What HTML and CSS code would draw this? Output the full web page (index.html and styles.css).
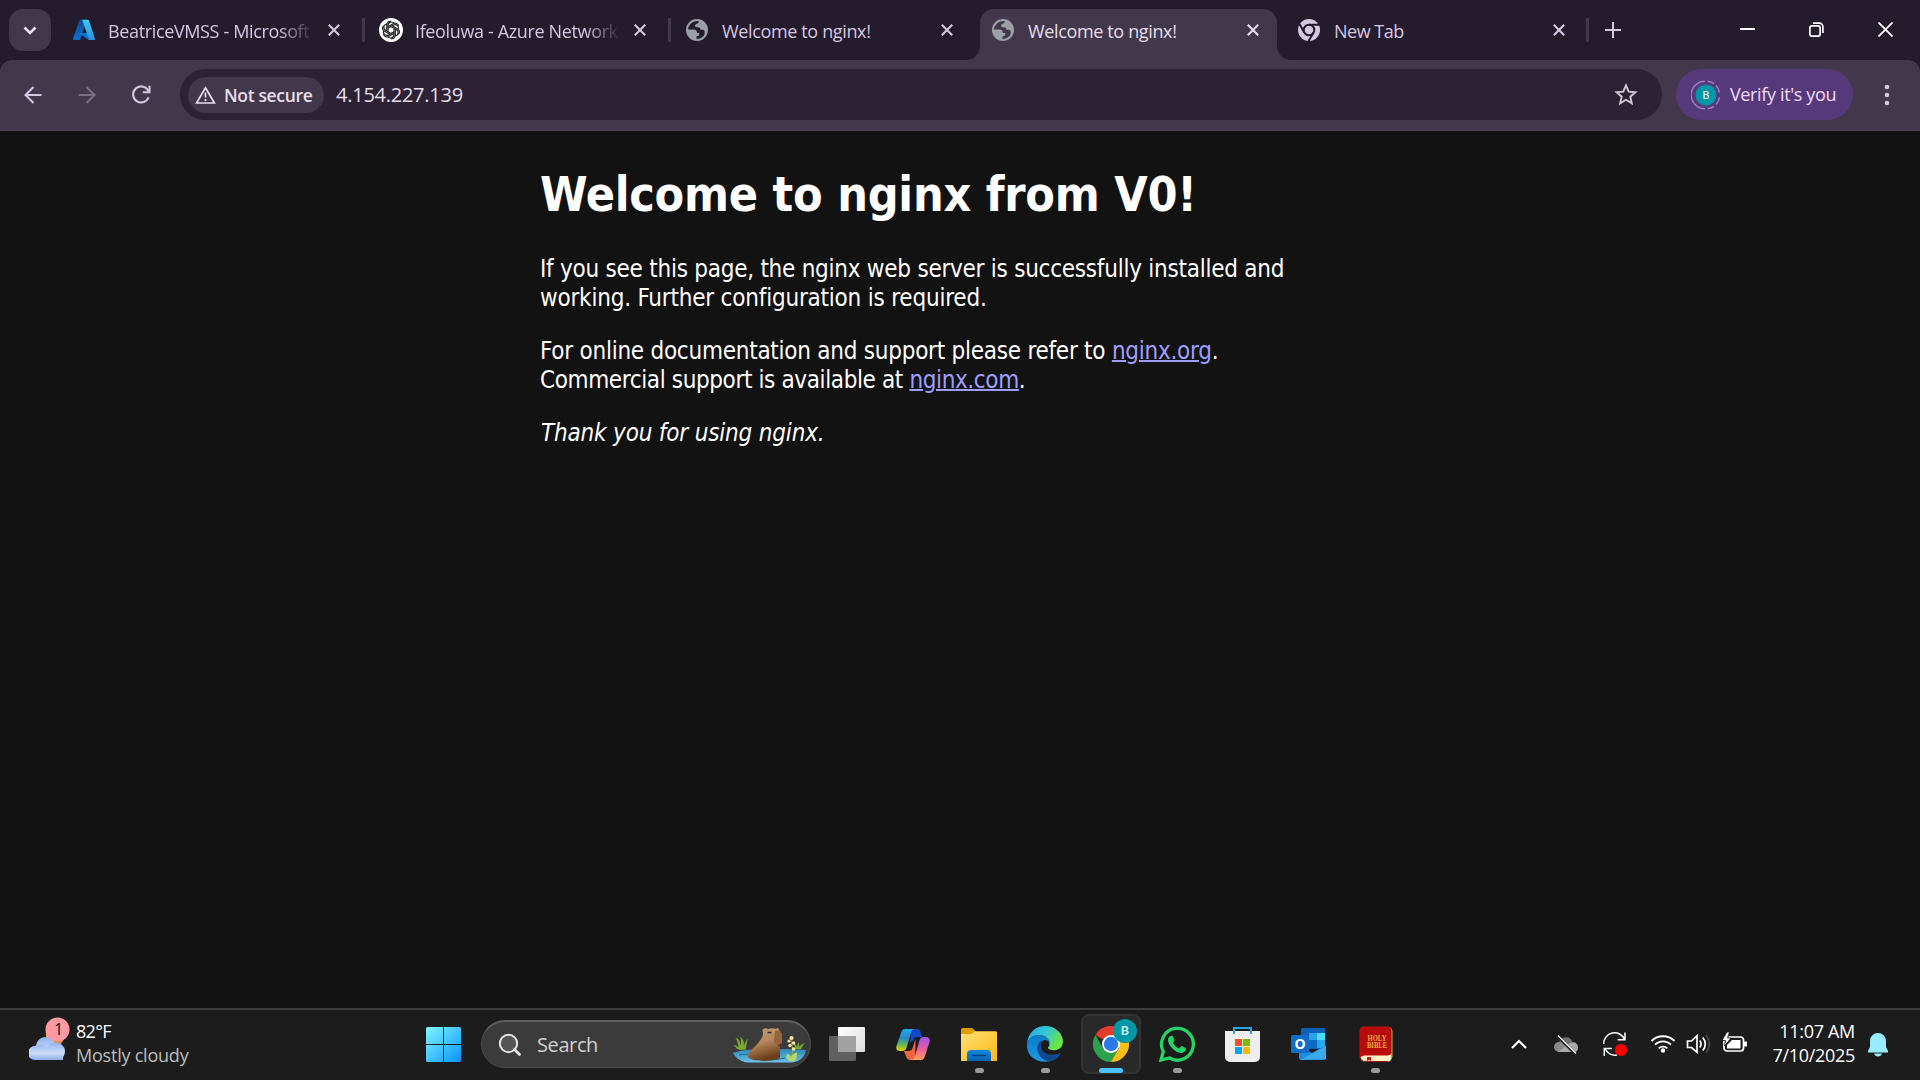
FILE: index.html
```html
<!DOCTYPE html>
<html lang="en">
<head>
<meta charset="utf-8">
<title>Welcome to nginx!</title>
<link rel="stylesheet" href="styles.css">
</head>
<body>
<svg width="0" height="0" class="defs" aria-hidden="true">
  <defs>
    <symbol id="close" viewBox="0 0 12 12"><path d="M.8.8l10.400 10.400M11.200.8L.8 11.200" fill="none" stroke="currentColor" stroke-width="2.100"/></symbol>
    <symbol id="globe" viewBox="0 0 22 22">
      <circle cx="11" cy="11" r="10" fill="none" stroke="#9aa0a6" stroke-width="2"/>
      <path d="M13 1.500c0 1.800-.6 2.800-2 3.200-1.400.3-1.900 1-1.900 2.300 0 1 .9 1.300 2.400 1.300 2.100 0 2.900.8 2.900 2.400h2.200c1.500 0 2 .6 2 2.100V17c2-1.800 2.700-4 2.600-6.500C20.800 5.500 17.500 2 13 1.500zM1.200 10.500h6.300c2.200 0 3.500 1.200 3.500 3.400h2.200c.7 2-.3 3.300-2.700 3.300v3.700C5 20.800 1 16.800 1.200 10.500z" fill="#9aa0a6"/>
    </symbol>
  </defs>
</svg>

<header class="tabstrip">
  <button class="tab-search" aria-label="Search tabs"><svg width="14" height="9" viewBox="0 0 14 9"><path d="M1.500 1.500L7 7l5.500-5.500" fill="none" stroke="#e6dfea" stroke-width="2.600"/></svg></button>
  <div class="tabs">
    <div class="tab first">
      <svg class="fav" viewBox="0 0 22 22"><defs><linearGradient id="azl" x1="0" y1="0" x2="0" y2="1"><stop offset="0" stop-color="#114a8b"/><stop offset="1" stop-color="#0a6fd0"/></linearGradient><linearGradient id="azr" x1="0" y1="0" x2="0" y2="1"><stop offset="0" stop-color="#3ccbf4"/><stop offset="1" stop-color="#2892df"/></linearGradient></defs><path d="M7.500.8h6.200L7.500 20c-.3.700-.8 1.100-1.400 1.100H1.300c-.9 0-1.500-.8-1.200-1.700L6.200 1.700c.2-.5.700-.9 1.300-.9z" fill="url(#azl)"/><path d="M5 14h9.500l1 7-8-6z" fill="#0078d4"/><path d="M8 .8h6.700c.6 0 1.100.4 1.300.9l5.900 17.700c.3.900-.3 1.700-1.200 1.700h-6.300c.9 0 1.500-.8 1.200-1.700L9.500 1.700C9.300 1.200 8.800.8 8 .8z" fill="url(#azr)"/></svg>
      <span class="title fade">BeatriceVMSS - Microsoft</span><svg class="x"><use href="#close"/></svg><i class="sep"></i>
    </div>
    <div class="tab">
      <svg class="fav gpt" viewBox="0 0 24 24"><circle cx="12" cy="12" r="12" fill="#fff"/><g fill="none" stroke="#222" stroke-width="1.200"><g id="petal"><path d="M9 13.700V7.400a3.400 3.400 0 016.200-1.900M9 8.800l5.500-3.200a3.400 3.400 0 015 2.200" /></g><use href="#petal" transform="rotate(60 12 12)"/><use href="#petal" transform="rotate(120 12 12)"/><use href="#petal" transform="rotate(180 12 12)"/><use href="#petal" transform="rotate(240 12 12)"/><use href="#petal" transform="rotate(300 12 12)"/></g></svg>
      <span class="title fade">Ifeoluwa - Azure Network</span><svg class="x"><use href="#close"/></svg><i class="sep"></i>
    </div>
    <div class="tab late"><svg class="fav"><use href="#globe"/></svg><span class="title">Welcome to nginx!</span><svg class="x"><use href="#close"/></svg></div>
    <div class="tab active"><svg class="fav"><use href="#globe"/></svg><span class="title">Welcome to nginx!</span><svg class="x"><use href="#close"/></svg></div>
    <div class="tab late">
      <svg class="fav" viewBox="0 0 22 22"><circle cx="11" cy="11" r="11" fill="#d6c6e1"/><circle cx="11" cy="11" r="5.300" fill="none" stroke="#241b2d" stroke-width="2"/><path d="M11 5.700h10M6.400 13.700L1.500 5M15.600 13.600L10.600 22" stroke="#241b2d" stroke-width="2"/></svg>
      <span class="title newtab">New Tab</span><svg class="x"><use href="#close"/></svg><i class="sep"></i>
    </div>
  </div>
  <svg class="plus" width="16" height="16" viewBox="0 0 16 16"><path d="M8 0v16M0 8h16" stroke="#d6c6e1" stroke-width="2"/></svg>
  <div class="window-buttons">
    <svg width="15" height="15" viewBox="0 0 15 15"><path d="M0 7h15" stroke="#fff" stroke-width="2"/></svg>
    <svg width="15" height="15" viewBox="0 0 15 15" fill="none" stroke="#fff" stroke-width="1.700"><rect x=".9" y="3.900" width="10.200" height="10.200" rx="2"/><path d="M4 1.200h6.300a3.600 3.600 0 013.600 3.600V11"/></svg>
    <svg width="15" height="15" viewBox="0 0 15 15"><path d="M.5.5l14 14M14.500.5l-14 14" stroke="#fff" stroke-width="1.800"/></svg>
  </div>
</header>

<div class="toolbar-bg">
<nav class="toolbar">
  <div class="nav-icons">
    <svg width="18" height="18" viewBox="0 0 18 18" fill="none" stroke="#d6c6e1" stroke-width="2"><path d="M17.500 9H1.500M9.500 1L1.500 9l8 8"/></svg>
    <svg width="18" height="18" viewBox="0 0 18 18" fill="none" stroke="#7b6f84" stroke-width="2"><path d="M.5 9h16M8.500 1l8 8-8 8"/></svg>
    <svg width="19" height="19" viewBox="0 0 19 19" fill="none" stroke="#d6c6e1" stroke-width="2.100"><path d="M16.600 12.300A8 8 0 1116 5.300L17 6.800M17.500.8v6.400h-6.700"/></svg>
  </div>
  <div class="omnibox">
    <div class="chip"><svg width="21" height="18" viewBox="0 0 21 18"><path d="M10.500 1.800L19.400 17H1.600z" fill="none" stroke="#e6dfea" stroke-width="1.700"/><path d="M10.500 6.500v5M10.500 13v2" stroke="#e6dfea" stroke-width="1.700"/></svg><span class="insecure">Not secure</span></div>
    <span class="url">4.154.227.139</span>
    <svg class="star" width="24" height="23" viewBox="0 0 24 23"><path d="M12 2.500l2.700 6.200 6.700.6-5.100 4.400 1.500 6.600-5.800-3.500-5.800 3.500 1.500-6.600-5.100-4.400 6.700-.6z" fill="none" stroke="#d0c8d4" stroke-width="1.900"/></svg>
  </div>
  <div class="verify">
    <svg width="30" height="30" viewBox="0 0 30 30"><circle cx="15" cy="15" r="10.500" fill="#0097a7"/><path d="M14 1.200A13.800 13.800 0 0014 28.800M16.500 1.300A13.800 13.800 0 0123 3.700M25 5.500A13.800 13.800 0 0128.500 12.500M28.600 17A13.800 13.800 0 0125 24.500M23 26.300A13.800 13.800 0 0116.500 28.700" fill="none" stroke="#a07ec4" stroke-width="1.500"/><text x="15" y="19" text-anchor="middle" font-size="11" font-family="Roboto, sans-serif" fill="#fff">B</text></svg>
    <span class="verify-text">Verify it's you</span>
  </div>
  <svg class="menu" width="6" height="22" viewBox="0 0 6 22" fill="#d6c6e1"><circle cx="3" cy="3" r="2.300"/><circle cx="3" cy="11" r="2.300"/><circle cx="3" cy="19" r="2.300"/></svg>
</nav>
</div>

<main class="page">
  <article class="content">
    <h1>Welcome to nginx from V0!</h1>
    <p>If you see this page, the nginx web server is successfully installed and<br><span class="loose">working. Further configuration is required.</span></p>
    <p>For online documentation and support please refer to <a href="#">nginx.org</a>.<br><span class="tight">Commercial support is available at <a href="#">nginx.com</a>.</span></p>
    <p><em>Thank you for using nginx.</em></p>
  </article>
</main>

<footer class="taskbar">
  <div class="weather">
    <svg width="41" height="44" viewBox="0 0 41 44"><defs><linearGradient id="cl" x1="0" y1="0" x2="0" y2="1"><stop offset="0" stop-color="#8fb2f0"/><stop offset=".6" stop-color="#cbdcf7"/><stop offset="1" stop-color="#8eb0ee"/></linearGradient></defs><circle cx="26" cy="20" r="9" fill="#f28a1c"/><path d="M17 17l3 2-2 4z" fill="#f6c62b"/><path d="M8 43a7 7 0 01-1-14.300C8 23 12 20 17 20c4 0 7 2 8.500 5.500A9 9 0 0134 34v9z" fill="url(#cl)"/><path d="M6 43a7 7 0 010-14 9 9 0 0112 2c1-4 5-5.500 8.500-5.500A9.300 9.300 0 0136 34c0 5-3 9-8 9z" fill="url(#cl)"/><circle cx="28.500" cy="12.500" r="12" fill="#ff99a4"/><text x="29.500" y="18" text-anchor="middle" font-size="16" font-family="Noto Sans, sans-serif" fill="#222">1</text></svg>
    <div class="weather-text"><span class="temp">82°F</span><br><span class="cond">Mostly cloudy</span></div>
  </div>
  <svg class="start" width="35" height="35" viewBox="0 0 35 35"><defs><linearGradient id="win" gradientUnits="userSpaceOnUse" x1="0" y1="0" x2="35" y2="35"><stop offset="0" stop-color="#7df6ff"/><stop offset="1" stop-color="#0a93ff"/></linearGradient></defs><path d="M1.500 0H17v17H0V1.500A1.500 1.500 0 011.500 0zM18 0h15.500A1.500 1.500 0 0135 1.500V17H18zM0 18h17v17H1.500A1.500 1.500 0 010 33.500zM18 18h17v15.500a1.500 1.500 0 01-1.500 1.500H18z" fill="url(#win)"/></svg>
  <div class="search">
    <svg width="24" height="24" viewBox="0 0 24 24"><circle cx="10.500" cy="10.500" r="8.700" fill="#555" stroke="#e4e6ea" stroke-width="2"/><path d="M16.500 16.500l5 5" stroke="#e4e6ea" stroke-width="2.800" stroke-linecap="round"/></svg>
    <span class="search-text">Search</span>
    <svg class="capy" width="74" height="36" viewBox="0 0 74 36"><defs><linearGradient id="fur" x1="0" y1="0" x2=".3" y2="1"><stop offset="0" stop-color="#c49a70"/><stop offset=".5" stop-color="#b88a5e"/><stop offset="1" stop-color="#6b3c18"/></linearGradient><linearGradient id="wat" x1="0" y1="0" x2="0" y2="1"><stop offset="0" stop-color="#2a86b4"/><stop offset="1" stop-color="#6cc0e8"/></linearGradient></defs><path d="M0 26c8-3 20-4 37-4s29 0 36 1c-1 7-7 12-14 12.500H14C7 34.500 2 30 0 26z" fill="url(#wat)"/><path d="M6 28c10-2 14 2 22 4 8 1 16 1 24-1" stroke="#1d6a98" fill="none"/><path d="M6 23C5 19 5 13 2 10.500c4 1 5 4 6 8 0-4 0-7-1-9 3 2 4 5 4 9 1-3 2-5 4-7-1 4-2 7-2 11zM4 22c-1-2-2-3-4-4 3 0 5 1 6 4zM62 22c0-3-1-5-2-6 2 0 3 2 4 4 0-2 1-4 2-5v5c1-2 3-3 6-4-2 2-3 4-4 6z" fill="#78a82e"/><path d="M15 28c2-6 8-8 11-13 3-4 4-6 4-8 0-2-1-3 0-5 2-1 4-1 5 0 3-1 6-1 8 0 1-2 3-1 3 1 2 2 3 4 3 7 0 3-1 5-2 7v14c-8 4-27 4-32-1z" fill="url(#fur)"/><path d="M42 4c5-1 7 1 7 5v7c-3 3-7 2-8-1z" fill="#94633f"/><path d="M44 17c1 1 3 1 4-1l1 2-2 2z" fill="#5e2c2c"/><path d="M34.500 5.500h4" stroke="#332236" stroke-width="1.500"/><path d="M59 34.500c-6-1-6-5-5-8 2 1 4 2 4 4 0-2 2-4 6-5 0 4 0 9-5 9z" fill="#b7d866"/><path d="M59 28c2-6-1-10-1-17" stroke="#8aa650" fill="none"/><g fill="#ffe3a0"><circle cx="58.500" cy="11" r="2.100"/><circle cx="56" cy="14" r="1.600"/><circle cx="60.500" cy="16" r="1.800"/><circle cx="57" cy="18.500" r="1.700"/><circle cx="60.500" cy="22" r="1.800"/></g></svg>
  </div>
  <div class="apps">
    <div class="app"><svg width="36" height="34" viewBox="0 0 36 34"><defs><linearGradient id="tv" x1="0" y1="0" x2="1" y2="1"><stop offset="0" stop-color="#fff"/><stop offset="1" stop-color="#ddd"/></linearGradient></defs><rect x="9" y="0" width="27" height="25" rx="1" fill="url(#tv)"/><rect x="0" y="9" width="27" height="25" rx="1" fill="#606060"/><path d="M9 9h18v16H9z" fill="#a2a2a2"/></svg></div>
    <div class="app"><svg width="34" height="31" viewBox="0 0 34 31"><defs><linearGradient id="c1" x1="0" y1="0" x2="0" y2="1"><stop offset="0" stop-color="#1aaef0"/><stop offset=".4" stop-color="#2389c8"/><stop offset=".7" stop-color="#62b65a"/><stop offset="1" stop-color="#f1d00b"/></linearGradient><linearGradient id="c2" x1="0" y1="0" x2="0" y2="1"><stop offset="0" stop-color="#9a55f0"/><stop offset=".5" stop-color="#e85a9c"/><stop offset="1" stop-color="#ffa05c"/></linearGradient></defs><path d="M16 0h5c2 0 3 1 3.600 3l1.500 5H21c-2 0-3 1-3.600 3L14 14z" fill="#1546c8"/><path d="M8 22h5c2 0 3-1 3.600-3l3-9L19 31h-5c-2 0-3-1-3.600-3z" fill="#f2643d"/><path d="M9 0h10c-2 0-3 1-3.600 3l-5 16c-.7 2-2 3-4 3H4c-3 0-4.500-2-3.500-5L5 4c1-2.500 2-4 4-4z" fill="url(#c1)"/><path d="M25 31H14c2 0 4-1 4.600-3l5-17c.7-2 2-3 4-3H30c3 0 4.500 2 3.500 5L29 27c-1 2.500-2 4-4 4z" fill="url(#c2)"/></svg></div>
    <div class="app dot"><svg width="36" height="33" viewBox="0 0 36 33"><defs><linearGradient id="fo" x1="0" y1="0" x2="1" y2="1"><stop offset="0" stop-color="#ffe07a"/><stop offset="1" stop-color="#fdb912"/></linearGradient><linearGradient id="fb" x1="0" y1="0" x2="0" y2="1"><stop offset="0" stop-color="#1288dd"/><stop offset="1" stop-color="#0b62b4"/></linearGradient></defs><path d="M0 1.500A1.500 1.500 0 011.500 0H11l4 3.500L11 8H0z" fill="#dd9c00"/><path d="M0 6h10.500l3.500-2.700h20.500A1.500 1.500 0 0136 4.800V33H0z" fill="url(#fo)"/><path d="M6 33v-7a4 4 0 014-4h16a4 4 0 014 4v7z" fill="url(#fb)"/><path d="M11 27.500h14" stroke="#074581" stroke-width="1.500"/></svg></div>
    <div class="app dot"><svg width="36" height="36" viewBox="0 0 36 36"><defs><linearGradient id="e1" x1="0" y1="0" x2="1" y2=".5"><stop offset="0" stop-color="#2aa5e8"/><stop offset=".5" stop-color="#31c5d9"/><stop offset="1" stop-color="#6be83f"/></linearGradient><linearGradient id="e2" x1="0" y1="0" x2="0" y2="1"><stop offset="0" stop-color="#0c7bc6"/><stop offset="1" stop-color="#1b9be8"/></linearGradient></defs><path d="M0 18C1 7 8 0 18 0c11 0 18 8 18 15.500 0 6-5 8.800-9 8.800-4 0-6-1.300-6-2.600 0-.8 1.500-1.400 1.500-4C22.500 13 18 9 12 9 6 9 1.500 13 0 18z" fill="url(#e1)"/><path d="M0 19C.5 13 5 9 12 9c6 0 10.500 4 10.500 8-1-2-2.500-3-4.500-3-6 2-8 8-4 14 2 4 6 7 10 7C11 38-.5 31 0 19z" fill="url(#e2)"/><path d="M17 14c-6 1-8 7-6 12 2 6 7 10 13 9 5-1 8-4 9.500-7.500-.3-.8-1-.6-1.500-.3C23 31 13 27 14 18.500c.3-2 1.500-3.500 3-4.500z" fill="#10498f"/></svg></div>
    <div class="app current"><svg width="36" height="36" viewBox="0 0 36 36"><path d="M18 18L2.400 9A18 18 0 0133.600 9H18z" fill="#e33b2e"/><path d="M2.400 9A18 18 0 0018 36l7.800-13.500L18 18l-7.800 4.500z" fill="#2da04b"/><path d="M18 36A18 18 0 0033.600 9H18l7.800 13.500z" fill="#fdc012"/><circle cx="18" cy="18" r="9" fill="#fff"/><circle cx="18" cy="18" r="7.200" fill="#2b78e8"/></svg><b class="profile">B</b></div>
    <div class="app dot"><svg width="36" height="36" viewBox="0 0 36 36"><path d="M2 34l2.300-8.500A15.900 15.900 0 1110.500 32z" fill="none" stroke="#25d366" stroke-width="3.300"/><path d="M12.800 9.800c.7 0 1 .2 1.300 1l1.300 3c.2.600 0 1-.3 1.500l-1.300 1.500c1.500 2.700 3.500 4.500 6.300 5.700l1.700-2c.4-.5.8-.6 1.400-.3l3 1.500c.7.300.8.600.7 1.200-.4 2.700-2.300 4-5 4-5.500-.6-11.500-6-12.900-12-.2-2.500 1-5.100 3.800-5.100z" fill="#25d366"/></svg></div>
    <div class="app store"><svg width="35" height="35" viewBox="0 0 35 35"><path d="M0 4h35v26a5 5 0 01-5 5H5a5 5 0 01-5-5z" fill="#eee"/><path d="M9 7V1h17v6" fill="none" stroke="#25a8e8" stroke-width="2"/><path d="M10 12h7v7h-7z" fill="#f25022"/><path d="M18 12h7v7h-7z" fill="#7fba00"/><path d="M10 20h7v7h-7z" fill="#00a4ef"/><path d="M18 20h7v7h-7z" fill="#ffb900"/></svg></div>
    <div class="app store"><svg width="35" height="32" viewBox="0 0 35 32"><path d="M11 0h22.500L34 1v20H10V1z" fill="#0f5fb4"/><path d="M18 5h8v7h-8z" fill="#28a0ea"/><path d="M26 5h8v7h-8z" fill="#50d9ff"/><path d="M18 12h8v8h-8z" fill="#0b6ac4"/><path d="M26 12h8v8h-8z" fill="#28a8ea"/><path d="M8 18l13 7 14-8v13.500L33.500 32h-24L8 30.500z" fill="#1f8be0"/><path d="M35 18v13L9 32z" fill="#39a9ec"/><rect x="0" y="7" width="18" height="18" rx="1.500" fill="#0f6cc7"/><text x="9" y="21" font-size="14" font-weight="700" font-family="Open Sans, sans-serif" text-anchor="middle" fill="#fff">O</text></svg></div>
    <div class="app dot bible"><svg width="34" height="36" viewBox="0 0 34 36"><path d="M28 .5q5.500 0 5.500 6v24q-1 5-6 5z" fill="#d8a63c"/><path d="M1 29h31v5q-2 2-5 2H6q-5-1-5-6z" fill="#fff0c8"/><path d="M5 .5h24q3 0 3.500 4v22q-.5 3-4.500 3H6q-4 0-5.500 3L.5 5q0-4.500 4.500-4.500z" fill="#b80c0c"/><path d="M1 31q1 4.500 6 4.500h22" fill="none" stroke="#a10d0d"/><path d="M8 31h4v4l-2-1-2 1z" fill="#c51a1a"/><g font-family="Liberation Serif, serif" font-weight="700" font-size="7.500" fill="#f0ae3c" text-anchor="middle"><text x="18" y="15" textLength="19" lengthAdjust="spacingAndGlyphs">HOLY</text><text x="18" y="22" textLength="20" lengthAdjust="spacingAndGlyphs">BIBLE</text></g></svg></div>
  </div>
  <div class="tray">
    <svg class="chevron" width="16" height="10" viewBox="0 0 16 10"><path d="M1 9l7-7 7 7" fill="none" stroke="#fff" stroke-width="2.200"/></svg>
    <svg class="cloud" width="24" height="20" viewBox="0 0 24 20"><path d="M5 8A7 7 0 0118.500 7l-8 6z" fill="#707070"/><path d="M5 17a5 5 0 110-10c3 0 7 3 13 10z" fill="#8b8b8b"/><path d="M4 17l12-9c4-2 8 0 8 4.500S21 17 19 17z" fill="#a8a8a8"/><path d="M3.500 1l18 18" stroke="#1c1c1c" stroke-width="3"/><path d="M4 .5l18 18" stroke="#fff" stroke-width="1.300"/></svg>
    <svg class="sync" width="26" height="26" viewBox="0 0 26 26"><path d="M1.700 13A10.800 10.800 0 0122.500 8.500M23 1.500v7.300h-7.300M15 24A10.800 10.800 0 013 17.500M2.300 25v-7.500h7.500" fill="none" stroke="#fff" stroke-width="1.500"/><circle cx="19" cy="19" r="6.100" fill="#f00"/></svg>
    <svg class="wifi" width="26" height="20" viewBox="0 0 26 20" fill="none" stroke="#fff" stroke-width="1.800"><path d="M1.500 8a16.300 16.300 0 0123 0M5 11.700a11.300 11.300 0 0116 0M8.700 15.300a6.200 6.200 0 018.600 0"/><circle cx="13" cy="17.500" r="1.300" fill="#fff"/></svg>
    <svg class="volume" width="26" height="20" viewBox="0 0 26 20" fill="none" stroke="#fff" stroke-width="1.700"><path d="M1.500 7h4L11 1.800v16.400L5.500 13.500h-4z"/><path d="M13.800 6.500q2.500 3.500 0 7M16.800 3.500q5 6.500 0 13"/><path d="M20 1q7 9 0 18" stroke="#4a4a4a"/></svg>
    <svg class="battery" width="26" height="22" viewBox="0 0 26 22"><rect x="2" y="5" width="19.500" height="14" rx="3" fill="none" stroke="#fff" stroke-width="1.700"/><path d="M5 16.500V13L10 8h8.500v8.500z" fill="#fff"/><path d="M22 9.500h3v5h-3z" fill="#fff"/><path d="M5 0L0 8.500h3.500L2.500 14 9 6H5.500L7.500 0z" fill="#fff" stroke="#1c1c1c" stroke-width=".8"/></svg>
    <div class="clock">11:07 AM<br>7/10/2025</div>
    <svg class="bell" width="20" height="24" viewBox="0 0 20 24"><path d="M10 0a8 8 0 018 8v6l2 4v1.500H0V18l2-4V8a8 8 0 018-8zM6 20.500h8Q13 23.500 10 23.500T6 20.500z" fill="#99ebff"/></svg>
  </div>
</footer>
</body>
</html>
```
FILE: styles.css
```css
* { box-sizing: border-box; }
html, body { height: 100%; }
body {
  margin: 0;
  display: flex;
  flex-direction: column;
  overflow: hidden;
  background: #121212;
  color: #fff;
  font-family: "Open Sans", "Noto Sans", sans-serif;
  font-size: 18px;
}
svg { display: block; flex: none; }
.defs { position: absolute; }
span { white-space: nowrap; }

/* tab strip */
.tabstrip { height: 60px; flex: none; display: flex; padding: 9px 18px 0 9px; background: #241b2d; }
.tab-search {
  width: 42px; height: 42px; padding: 0; border: 0; border-radius: 14px; background: #42374b;
  display: flex; align-items: center; justify-content: center;
}
.tabs { display: flex; margin-left: 8px; }
.tab { width: 306px; height: 51px; display: flex; align-items: flex-start; padding: 10px 0 0 14px; color: #d6c6e1; }
.tab.late { padding-left: 15px; }
.fav { width: 22px; height: 22px; }
.fav.gpt { width: 24px; height: 24px; margin: -1px -2px 0 0; }
.title { flex: none; width: 203px; margin: -1px 0 0 14px; line-height: 26px; letter-spacing: -.36px; }
.first .title { width: 204px; margin-left: 13px; }
.title.newtab { letter-spacing: -.5px; }
.fade { -webkit-mask-image: linear-gradient(90deg, #000 170px, transparent 206px); mask-image: linear-gradient(90deg, #000 170px, transparent 206px); }
.x { width: 12px; height: 12px; margin: 5px 0 0 16px; }
.sep { width: 3px; height: 24px; margin: -1px 0 0 22px; border-radius: 1px; background: #42374b; }
.late .sep { margin-left: 21px; }
.tab.active {
  width: 297px; margin: 0 6px 0 3px; padding-left: 12px; position: relative;
  border-radius: 14px 14px 0 0; background: #42374b; color: #e6dfea;
}
.tab.active::before, .tab.active::after { content: ""; position: absolute; bottom: 0; width: 14px; height: 14px; }
.tab.active::before { left: -14px; background: radial-gradient(circle at 0 0, transparent 13.5px, #42374b 14.500px); }
.tab.active::after { right: -14px; background: radial-gradient(circle at 100% 0, transparent 13.5px, #42374b 14.500px); }
.plus { margin: 13px 0 0 16px; }
.window-buttons { display: flex; gap: 54px; margin: 13px 9px 0 auto; }

/* toolbar */
.toolbar-bg { flex: none; background: #241b2d; }
.toolbar {
  height: 71px; display: flex; align-items: flex-start; padding-top: 9px;
  border-radius: 12px 12px 0 0; background: #42374b; border-bottom: 2px solid #4b3e53;
}
.nav-icons { display: flex; gap: 36px; align-items: center; height: 51px; width: 180px; padding-left: 24px; }
.omnibox { width: 1482px; height: 51px; padding: 0 24px 0 8px; display: flex; align-items: center; border-radius: 26px; background: #2c2234; }
.chip { width: 136px; height: 36px; display: flex; align-items: center; padding-left: 7px; border-radius: 18px; background: #42374b; }
.insecure { margin-left: 8px; font-weight: 600; font-size: 17.5px; line-height: 26px; letter-spacing: -.35px; color: #e6dfea; }
.url { margin-left: 12px; font-size: 20px; line-height: 28px; letter-spacing: -.25px; color: #e6dfea; }
.star { margin-left: auto; }
.verify { width: 177px; height: 51px; margin-left: 14px; padding-left: 15px; display: flex; align-items: center; border-radius: 26px; background: #56397a; }
.verify-text { margin: -1px 0 0 9px; letter-spacing: -.36px; color: #eedcfe; }
.menu { margin: 15px 0 0 31px; }

/* page */
.page { flex: 1; min-height: 0; overflow: hidden; background: #121212; }
.content {
  width: 840px; margin: 0 auto; padding-top: 34px; letter-spacing: -.252px;
  font: 24px/29px "DejaVu Sans Condensed", "DejaVu Sans", sans-serif; font-stretch: condensed;
}
h1 { margin: 0 0 32px; font-size: 48px; line-height: 58px; }
p { margin: 0 0 24px; }
a { color: #9e9eff; text-decoration-thickness: 2px; }
em { margin-left: 1px; letter-spacing: -.18px; }
.loose { letter-spacing: -.21px; }
.tight { letter-spacing: -.38px; }

/* taskbar */
.taskbar { height: 72px; flex: none; display: flex; align-items: flex-start; border-top: 2px solid #3c3c3c; background: #1c1c1c; }
.weather { width: 397px; display: flex; padding: 7px 0 0 29px; }
.weather-text { margin-left: 6px; padding-top: 2px; line-height: 24px; letter-spacing: -.22px; }
.temp { letter-spacing: -.7px; }
.cond { color: #bdbdbd; }
.start { margin: 17px 0 0 29px; }
.search {
  width: 330px; height: 48px; margin: 10px 0 0 20px; padding: 0 4px 0 16px; display: flex; align-items: center;
  border: 1px solid #4c4c4c; border-top: 2px solid #606060; border-radius: 24px; background: #3b3b3b;
}
.search-text { margin-left: 15px; font-size: 20px; line-height: 28px; letter-spacing: -.4px; color: #d0d0d0; }
.capy { margin: 0 -1px 0 auto; }
.apps { display: flex; margin-left: 3px; }
.app { position: relative; width: 60px; height: 60px; margin: 4px 3px; display: flex; align-items: center; justify-content: center; }
.store { padding-right: 2px; }
.bible { padding-left: 2px; }
.dot::after, .current::after { content: ""; position: absolute; left: 26px; bottom: 1px; width: 9px; height: 5px; border-radius: 3px; background: #9a9a9a; }
.current { border: 2px solid #333; border-radius: 8px; background: #292929; }
.current::after { left: 16px; bottom: -1px; width: 24px; background: #4cc2ff; }
.profile {
  position: absolute; left: 30px; top: 3px; width: 24px; height: 24px; border-radius: 50%;
  background: #0097a7; font: 600 13px/24px Roboto, sans-serif; text-align: center; color: #cdeef1;
}
.tray { display: flex; align-items: flex-start; margin-left: auto; padding-right: 32px; }
.chevron { margin: 29px 27px 0 0; }
.cloud { margin: 25px 24px 0 0; }
.sync { margin: 21px 22px 0 0; }
.wifi { margin: 23px 10px 0 0; }
.volume { margin: 24px 10px 0 0; }
.battery { margin: 22px 0 0; }
.clock { width: 107px; padding-top: 9px; text-align: right; line-height: 24px; letter-spacing: -.3px; }
.bell { margin: 23px 0 0 13px; }
```
